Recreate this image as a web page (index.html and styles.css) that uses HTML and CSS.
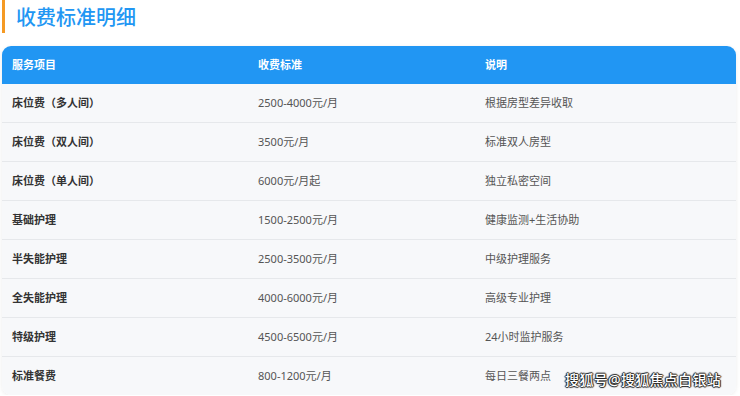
FILE: index.html
```html
<!DOCTYPE html>
<html lang="zh-CN">
<head>
  <meta charset="UTF-8">
  <title>收费标准明细</title>
  <link rel="stylesheet" href="styles.css">
</head>
<body>
  <main class="page">
    <h2 class="section-title">收费标准明细</h2>

    <div class="fee-card">
      <table class="fee-table">
        <colgroup>
          <col class="col-item">
          <col class="col-price">
          <col class="col-note">
        </colgroup>
        <thead>
          <tr>
            <th>服务项目</th>
            <th>收费标准</th>
            <th>说明</th>
          </tr>
        </thead>
        <tbody>
          <tr><td>床位费（多人间）</td><td>2500-4000元/月</td><td>根据房型差异收取</td></tr>
          <tr><td>床位费（双人间）</td><td>3500元/月</td><td>标准双人房型</td></tr>
          <tr><td>床位费（单人间）</td><td>6000元/月起</td><td>独立私密空间</td></tr>
          <tr><td>基础护理</td><td>1500-2500元/月</td><td>健康监测+生活协助</td></tr>
          <tr><td>半失能护理</td><td>2500-3500元/月</td><td>中级护理服务</td></tr>
          <tr><td>全失能护理</td><td>4000-6000元/月</td><td>高级专业护理</td></tr>
          <tr><td>特级护理</td><td>4500-6500元/月</td><td>24小时监护服务</td></tr>
          <tr><td>标准餐费</td><td>800-1200元/月</td><td>每日三餐两点</td></tr>
        </tbody>
      </table>
      <div class="watermark">搜狐号@搜狐焦点白银站</div>
    </div>
  </main>
</body>
</html>
```

FILE: styles.css
```css
/* Global */
body {
  margin: 0;
  padding: 0;
  background: #fff;
  font-family: "Noto Sans", "Noto Sans CJK SC", sans-serif;
  color: #333;
}

.page {
  padding: 0 4px 0 2px;
}

/* Title */
.section-title {
  margin: 0 0 13px;
  height: 33px;
  line-height: 35px;
  padding-left: 11px;
  border-left: 3px solid #f59a23;
  font-size: 20px;
  font-weight: 500;
  color: #2196f3;
}

/* Table card */
.fee-card {
  position: relative;
  border-radius: 9px;
  overflow: hidden;
  box-shadow: 0 1px 4px rgba(0, 0, 0, 0.08);
}

.fee-table {
  width: 100%;
  border-collapse: collapse;
  table-layout: fixed;
  font-size: 11px;
}

.col-item { width: 246px; }
.col-price { width: 227px; }

.fee-table th,
.fee-table td {
  text-align: left;
  padding: 12px 10px;
  line-height: 14px;
}

.fee-table th {
  background: #2196f3;
  color: #fff;
  font-weight: 700;
}

.fee-table td {
  background: #f7f8fa;
  color: #555;
  border-bottom: 1.4px solid #e6e8eb;
}

.fee-table td:first-child {
  color: #333;
  font-weight: 700;
}

.fee-table tbody tr:last-child td {
  border-bottom: none;
}

/* Watermark */
.watermark {
  position: absolute;
  right: 15px;
  bottom: 6px;
  font-size: 14px;
  font-weight: 500;
  color: #fff;
  letter-spacing: 0.3px;
  text-shadow: 0 0 1px #222, 1px 0 1px #222, -1px 0 1px #222, 0 1px 1px #222, 0 -1px 1px #222;
}
```
